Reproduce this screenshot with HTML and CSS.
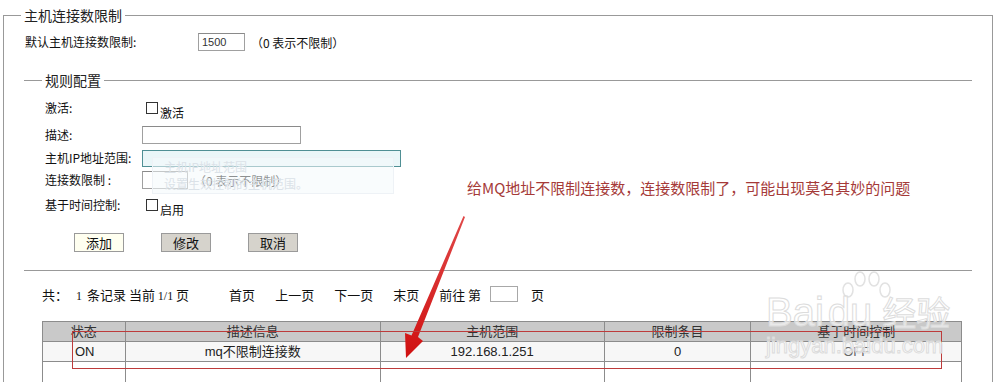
FILE: index.html
```html
<!DOCTYPE html>
<html>
  <head>
    <meta charset="utf-8">
    <title>主机连接数限制</title>
    <link rel="stylesheet" href="styles.css">
  </head>
  <body>
    <div class="page">
      <fieldset class="main">
        <legend>主机连接数限制</legend>

        <div class="row top-row">
          <span class="label wide">默认主机连接数限制:</span>
          <input class="field short" type="text" value="1500">
          <span class="hint">（0 表示不限制）</span>
        </div>

        <fieldset class="rules">
          <legend>规则配置</legend>

          <div class="row r-active">
            <span class="label">激活:</span>
            <input class="check" type="checkbox">
            <span class="check-text">激活</span>
          </div>
          <div class="row r-desc">
            <span class="label">描述:</span>
            <input class="field desc" type="text">
          </div>
          <div class="row r-ip">
            <span class="label">主机IP地址范围:</span>
            <input class="field ip" type="text">
          </div>
          <div class="row r-limit">
            <span class="label">连接数限制 :</span>
            <input class="field limit" type="text">
            <span class="hint">（0 表示不限制）</span>
          </div>
          <div class="row r-time">
            <span class="label">基于时间控制:</span>
            <input class="check" type="checkbox">
            <span class="check-text">启用</span>
          </div>

          <div class="buttons">
            <button class="btn add">添加</button>
            <button class="btn">修改</button>
            <button class="btn">取消</button>
          </div>
        </fieldset>

        <div class="pager">
          <span class="info">共：<span class="num one">1</span>条记录 当前 <span class="num">1/1</span> 页</span>
          <span class="nav">
            <a>首页</a>
            <a>上一页</a>
            <a>下一页</a>
            <a>末页</a>
          </span>
          <span class="goto">前往 第<input class="page-box" type="text">页</span>
        </div>

        <table class="list">
          <tr>
            <th class="c-state">状态</th>
            <th class="c-desc">描述信息</th>
            <th class="c-range">主机范围</th>
            <th class="c-count">限制条目</th>
            <th class="c-time">基于时间控制</th>
          </tr>
          <tr class="data">
            <td class="state">ON</td>
            <td>mq不限制连接数</td>
            <td>192.168.1.251</td>
            <td>0</td>
            <td class="off">OFF</td>
          </tr>
          <tr class="empty">
            <td></td>
            <td></td>
            <td></td>
            <td></td>
            <td></td>
          </tr>
        </table>
      </fieldset>

      <!-- faded tooltip under the IP field -->
      <div class="ghost-tip">
        <div class="ghost-title">主机IP地址范围</div>
        <div class="ghost-text">设置生效控制的主机范围。</div>
      </div>

      <!-- annotation drawn over the screenshot -->
      <div class="note">给MQ地址不限制连接数，连接数限制了，可能出现莫名其妙的问题</div>
      <svg class="arrow" width="1000" height="382" viewBox="0 0 1000 382">
        <defs>
          <linearGradient id="ar" x1="0" y1="0" x2="0" y2="1">
            <stop offset="0" stop-color="#e04848"/>
            <stop offset="1" stop-color="#d01010"/>
          </linearGradient>
        </defs>
        <polygon fill="url(#ar)" points="463.5,216 465,217 418,337 423,341 406,358 405,333 411.5,335.5"/>
      </svg>
      <div class="mark-box"></div>

      <div class="watermark">
        <svg class="paw" width="70" height="40" viewBox="0 0 70 40">
          <g fill="none" stroke="#e2e2e2" stroke-width="1.5">
            <ellipse cx="20" cy="20" rx="5" ry="7"/>
            <ellipse cx="32" cy="9" rx="5" ry="7"/>
            <ellipse cx="46" cy="9" rx="5" ry="7"/>
            <ellipse cx="57" cy="20" rx="5" ry="7"/>
          </g>
        </svg>
        <div class="wm-top">Bai<span class="wm-du">du</span><span class="wm-cn">经验</span></div>
        <div class="wm-url">jingyan.baidu.com</div>
      </div>
    </div>
  </body>
</html>
```

FILE: styles.css
```css
body {
  margin: 0;
  background-color: #fff;
  color: #111;
  font-family: "Noto Sans CJK SC", sans-serif;
  font-size: 12px;
  overflow: hidden;
}

.page {
  position: relative;
  width: 1000px;
  height: 382px;
  overflow: hidden;
}

fieldset legend {
  font-size: 14px;
  line-height: 20px;
  color: #222;
}

.main {
  box-sizing: border-box;
  width: 990px;
  margin: 5px 0 0 3px;
  padding: 0 0 0 21px;
  border: 1px solid #999;
  border-bottom: none;
}

.main > legend {
  margin-left: -4px;
  padding: 0 3px;
}

.row {
  display: flex;
  align-items: center;
  height: 22px;
}

.label {
  width: 97px;
  flex-shrink: 0;
  line-height: 22px;
}

.label.wide {
  width: 173px;
}

.top-row {
  margin-top: 6px;
}

.field {
  box-sizing: border-box;
  height: 18px;
  margin: 0;
  padding: 0 3px;
  border: 1px solid #a0a0a0;
  border-top-color: #8a8a8a;
  background-color: #fff;
  font-family: "Liberation Sans", sans-serif;
  font-size: 11px;
  color: #333;
}

.short {
  width: 47px;
}

.hint {
  margin-left: 6px;
}

.rules {
  box-sizing: border-box;
  width: 948px;
  margin: 17px 0 0 -1px;
  padding: 7px 0 18px 21px;
  border: 1px solid #999;
  border-left: none;
  border-right: none;
}

.rules > legend {
  margin-left: -3px;
  padding: 0 3px;
}

.r-desc {
  margin-top: 5px;
}

.r-ip {
  margin-top: 1px;
}

.r-time {
  margin-top: 3px;
}

.check {
  appearance: none;
  box-sizing: border-box;
  width: 12px;
  height: 12px;
  margin: 0 2px 0 4px;
  border: 1px solid #333;
  background-color: #fff;
}

.check-text {
  padding-top: 9px;
}

.desc {
  width: 159px;
}

.ip {
  width: 259px;
  height: 17px;
  border: 1px solid #4f8f94;
  background-color: #eaf6f8;
}

.limit {
  width: 46px;
}

.buttons {
  display: flex;
  gap: 37px;
  margin: 17px 0 0 29px;
}

.btn {
  box-sizing: border-box;
  width: 50px;
  height: 19px;
  padding: 0;
  border: 1px solid #9a9a9a;
  background-color: #d6d3cc;
  font-family: "Noto Sans CJK SC", sans-serif;
  font-size: 13px;
  line-height: 17px;
  color: #111;
}

.btn.add {
  background-color: #fffff0;
}

.pager {
  display: flex;
  align-items: center;
  height: 20px;
  margin: 13px 0 0 17px;
  font-size: 13px;
}

.num {
  font-family: "Liberation Serif", serif;
  font-size: 12px;
}

.one {
  margin: 0 5px 0 8px;
}

.nav {
  display: flex;
  gap: 20px;
  margin-left: 40px;
}

.goto {
  display: flex;
  align-items: center;
  margin-left: 20px;
  white-space: pre;
}

.page-box {
  box-sizing: border-box;
  width: 28px;
  height: 16px;
  margin: 0 13px 0 9px;
  border: 1px solid #a8a8a8;
}

.list {
  width: 920px;
  margin: 17px 0 0 17px;
  border-collapse: collapse;
  font-family: "Liberation Sans", "Noto Sans CJK SC", sans-serif;
  font-size: 13px;
  color: #222;
}

.list th,
.list td {
  height: 19px;
  padding: 0;
  border: 1px solid #8c8c8c;
  text-align: center;
  font-weight: normal;
  line-height: 18px;
}

.list th {
  background-color: #c9c9c9;
  color: #333;
}

.c-state { width: 82px; }
.c-desc { width: 256px; }
.c-range { width: 224px; }
.c-count { width: 147px; }
.c-time { width: 211px; }

.data td {
  background-color: #f7f7f7;
}

.list td.state {
  text-align: left;
  padding-left: 32px;
}

.off {
  color: #666;
}

.list .empty td {
  height: 30px;
}

.ghost-tip {
  position: absolute;
  left: 152px;
  top: 157px;
  box-sizing: border-box;
  width: 242px;
  height: 37px;
  padding: 0 0 0 11px;
  border: 1px solid #eef2f6;
  background-color: rgba(244, 249, 252, 0.55);
  color: #dbe2e8;
  font-size: 12px;
  line-height: 17px;
}

.note {
  position: absolute;
  left: 467px;
  top: 177px;
  font-size: 15px;
  line-height: 22px;
  color: #a53a38;
  white-space: nowrap;
}

.arrow {
  position: absolute;
  left: 0;
  top: 0;
}

.mark-box {
  position: absolute;
  left: 72px;
  top: 331px;
  width: 868px;
  height: 36px;
  border: 1px solid #bd3b3b;
}

.watermark {
  position: absolute;
  left: 766px;
  top: 270px;
  width: 200px;
  color: rgba(255, 255, 255, 0.6);
  -webkit-text-stroke: 1px #dcdcdc;
  font-family: "Liberation Sans", sans-serif;
}

.paw {
  display: block;
  margin-left: 62px;
}

.wm-top {
  margin-top: -18px;
  font-size: 40px;
  line-height: 40px;
  white-space: nowrap;
}

.wm-du {
  margin-left: 4px;
}

.wm-cn {
  margin-left: 10px;
  font-family: "Noto Sans CJK SC", sans-serif;
  font-size: 34px;
}

.wm-url {
  margin-top: 2px;
  font-size: 22px;
  line-height: 24px;
  white-space: nowrap;
}
```
